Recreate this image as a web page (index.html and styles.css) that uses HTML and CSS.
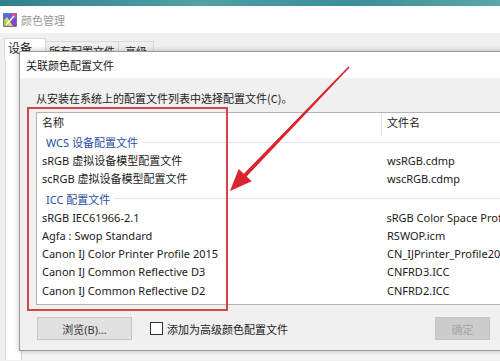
FILE: index.html
```html
<!DOCTYPE html>
<html lang="zh-CN">
<head>
<meta charset="utf-8">
<link rel="stylesheet" href="styles.css">
</head>
<body>
<div class="desk"></div>
<div class="win">
  <div class="titlebar">
    <svg class="appicon" width="14" height="14" viewBox="0 0 14 14">
      <defs>
        <linearGradient id="g1" x1="0" y1="0" x2="1" y2="1">
          <stop offset="0" stop-color="#3b7be0"/>
          <stop offset="1" stop-color="#8a3cc8"/>
        </linearGradient>
      </defs>
      <rect x="0.5" y="0.5" width="13" height="13" fill="url(#g1)" stroke="#4a4a8a" stroke-width="0.6"/>
      <polygon points="1,13 1,7 6,13" fill="#8fd14f"/>
      <polygon points="6,13 1,7 4,4 10,13" fill="#f2d23c"/>
      <polygon points="8,1 13,1 13,6" fill="#e84a8a"/>
      <line x1="3" y1="12" x2="11" y2="3" stroke="#ffffff" stroke-width="1.4"/>
    </svg>
    <span class="wintitle">颜色管理</span>
  </div>
  <div class="winbody">
    <div class="tabs">
      <div class="tab active">设备</div>
      <div class="tab">所有配置文件</div>
      <div class="tab">高级</div>
    </div>
    <div class="panel"><div class="inner"></div></div>
  </div>
</div>

<div class="dialog">
  <div class="dtitle">关联颜色配置文件</div>
  <div class="dbody">
    <p class="instr">从安装在系统上的配置文件列表中选择配置文件(C)。</p>
    <div class="listbox">
      <div class="lhead"><div class="c1">名称</div><div class="c2">文件名</div></div>
      <div class="group"><span>WCS 设备配置文件</span></div>
      <div class="row"><div class="c1">sRGB 虚拟设备模型配置文件</div><div class="c2">wsRGB.cdmp</div></div>
      <div class="row"><div class="c1">scRGB 虚拟设备模型配置文件</div><div class="c2">wscRGB.cdmp</div></div>
      <div class="group"><span>ICC 配置文件</span></div>
      <div class="row"><div class="c1">sRGB IEC61966-2.1</div><div class="c2">sRGB Color Space Profile.icm</div></div>
      <div class="row"><div class="c1">Agfa : Swop Standard</div><div class="c2">RSWOP.icm</div></div>
      <div class="row"><div class="c1">Canon IJ Color Printer Profile 2015</div><div class="c2">CN_IJPrinter_Profile2015.icc</div></div>
      <div class="row"><div class="c1">Canon IJ Common Reflective D3</div><div class="c2">CNFRD3.ICC</div></div>
      <div class="row"><div class="c1">Canon IJ Common Reflective D2</div><div class="c2">CNFRD2.ICC</div></div>
    </div>
    <div class="footer">
      <button class="btn">浏览(B)...</button>
      <label class="chk"><span class="box"></span>添加为高级颜色配置文件</label>
      <button class="btn ok" disabled>确定</button>
    </div>
  </div>
</div>

<div class="redbox"></div>
<svg class="arrow" width="500" height="361" viewBox="0 0 500 361">
  <polygon fill="#d8262c" points="349.6,67.6 246.6,176.5 251.7,181.3 230,191 238.7,168.9 243.8,173.7 348.4,66.4"/>
</svg>
</body>
</html>
```

FILE: styles.css
```css
html, body {
  margin: 0;
  padding: 0;
}
body {
  width: 500px;
  height: 361px;
  overflow: hidden;
  position: relative;
  background: #f0f0f0;
  font-family: "Noto Sans", "Noto Sans CJK SC", sans-serif;
  font-size: 11px;
  color: #1a1a1a;
}
.desk {
  height: 6px;
  background: linear-gradient(90deg, #2f7f8e, #4fa1a6 40%, #3a8e99 70%, #5aa7a8);
}
.titlebar {
  height: 27px;
  background: #ffffff;
  display: flex;
  align-items: center;
  padding-left: 3px;
}
.appicon {
  display: block;
  margin-right: 4px;
}
.wintitle {
  font-family: "Noto Sans CJK SC", sans-serif;
  font-size: 11px;
  color: #9a9a9a;
}
.winbody {
  height: 328px;
  background: #f0f0f0;
  padding-top: 7px;
  padding-left: 4px;
  box-sizing: border-box;
}
.tabs {
  display: flex;
  align-items: flex-end;
  height: 20px;
}
.tab {
  font-family: "Noto Sans CJK SC", sans-serif;
  font-size: 11px;
  height: 18px;
  line-height: 18px;
  padding: 0 3px;
  border: 1px solid #d9d9d9;
  border-bottom: none;
  background: #f0f0f0;
  color: #222;
}
.tab.active {
  font-size: 12px;
  height: 21px;
  background: #ffffff;
  padding: 0 13px 0 3px;
}
.tab + .tab {
  border-left: none;
}
.tab:last-child {
  padding: 0 6px;
}
.panel {
  height: 300px;
  border-left: 1px solid #d9d9d9;
  background: #ffffff;
  margin-left: 1px;
  padding-left: 15px;
}
.inner {
  height: 100%;
  border-left: 1px solid #cfcfcf;
  background: #f5f5f5;
}

.dialog {
  position: absolute;
  left: 19px;
  top: 51px;
  width: 540px;
  height: 300px;
  box-sizing: border-box;
  border: 1px solid #9a9a9a;
  background: #f0f0f0;
  box-shadow: 0 0 6px rgba(0, 0, 0, 0.25);
  display: flex;
  flex-direction: column;
}
.dtitle {
  height: 26px;
  line-height: 26px;
  background: #ffffff;
  padding-left: 6px;
  font-family: "Noto Sans CJK SC", sans-serif;
  font-size: 11px;
  color: #1a1a1a;
}
.dbody {
  flex: 1;
  padding-left: 16px;
}
.instr {
  margin: 12px 0 0 0;
  height: 16px;
  line-height: 16px;
  font-family: "Noto Sans CJK SC", sans-serif;
  font-size: 11px;
}
.listbox {
  margin-top: 6px;
  height: 193px;
  width: 500px;
  box-sizing: border-box;
  border: 1px solid #b4b4b4;
  background: #ffffff;
}
.lhead, .row {
  display: flex;
}
.lhead {
  height: 19px;
  line-height: 19px;
}
.row {
  height: 18.3px;
  line-height: 18.3px;
}
.c1 {
  width: 345px;
  box-sizing: border-box;
  padding-left: 5px;
  white-space: nowrap;
}
.c2 {
  padding-left: 5px;
  white-space: nowrap;
}
.lhead .c1 {
  border-right: 1px solid #e3e3e3;
  height: 23px;
}
.group {
  height: 20px;
  display: flex;
  align-items: center;
  padding-left: 9px;
  color: #1f4f9e;
}
.group::after {
  content: "";
  flex: 1;
  border-top: 1px solid #dde4ee;
  margin-left: 4px;
}
.footer {
  margin-top: 12px;
  height: 23px;
  display: flex;
  align-items: center;
  padding-right: 68px;
}
.btn {
  width: 95px;
  height: 23px;
  margin-left: 1px;
  font-family: "Noto Sans", "Noto Sans CJK SC", sans-serif;
  font-size: 11px;
  color: #333;
  background: #e1e1e1;
  border: 1px solid #c6c6c6;
  padding: 0;
}
.btn.ok {
  width: 55px;
  margin-left: auto;
  background: #cccccc;
  border-color: #c4c4c4;
  color: #a6a6a6;
}
.chk {
  display: flex;
  align-items: center;
  margin-left: 18px;
  font-family: "Noto Sans CJK SC", sans-serif;
  font-size: 11px;
}
.box {
  width: 11px;
  height: 11px;
  border: 1px solid #333;
  background: #ffffff;
  margin-right: 4px;
}
.redbox {
  position: absolute;
  left: 27px;
  top: 107px;
  width: 201px;
  height: 204px;
  box-sizing: border-box;
  border: 2px solid #d2464b;
}
.arrow {
  position: absolute;
  left: 0;
  top: 0;
  pointer-events: none;
}
```
